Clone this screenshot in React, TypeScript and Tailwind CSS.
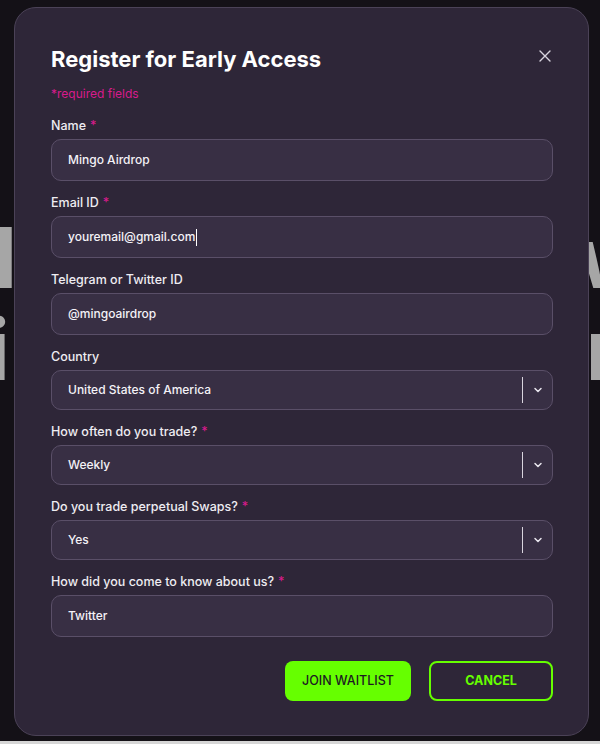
import React from "react";

const Asterisk = () => <span className="ml-1 text-[#d81b8c]">*</span>;

const Chevron = () => (
  <svg width="12" height="12" viewBox="0 0 24 24" fill="none" stroke="#e9e6ee" strokeWidth="3" strokeLinecap="round" strokeLinejoin="round">
    <path d="M6 9l6 6 6-6" />
  </svg>
);

interface FieldProps {
  label: string;
  required?: boolean;
  value: string;
  select?: boolean;
  caret?: boolean;
}

const Field: React.FC<FieldProps> = ({ label, required, value, select, caret }) => {
  return (
    <div className="flex flex-col">
      <label className="mb-[4px] text-[12.5px] leading-[18px] font-medium text-[#efedf2]">
        {label}
        {required && <Asterisk />}
      </label>
      {select ? (
        <div className="flex h-[40px] items-center rounded-[10px] border border-[#5a4f68] bg-[#382f44]">
          <span className="flex-1 pl-[16px] text-[12px] font-medium text-[#f4f2f7]">{value}</span>
          <div className="h-[26px] w-px bg-[#d9d5de]" />
          <div className="flex w-[29px] items-center justify-center">
            <Chevron />
          </div>
        </div>
      ) : (
        <div className="flex h-[42px] items-center rounded-[10px] border border-[#5a4f68] bg-[#382f44] pl-[16px]">
          <span className="text-[12px] font-medium text-[#f4f2f7]">{value}</span>
          {caret && <span className="ml-px h-[17px] w-px bg-white" />}
        </div>
      )}
    </div>
  );
};

export default function App() {
  return (
    <div
      className="relative h-[744px] w-[600px] overflow-hidden bg-[#141117]"
      style={{ fontFamily: "Inter, 'Noto Sans', sans-serif" }}
    >
      {/* page behind the dialog */}
      <div className="flex flex-col pt-[212px] text-[84px] leading-[92px] font-bold text-[#a6a6a6]">
        <div className="flex justify-between">
          <span className="-ml-[36px]">d</span>
          <span className="-mr-[50px]">w</span>
        </div>
        <div className="flex justify-between">
          <span className="-ml-[13px]">i</span>
          <span className="-mr-[20px]">r</span>
        </div>
      </div>
      <div className="absolute bottom-0 left-0 h-[3px] w-full bg-[#d6d6d6]" />

      {/* dialog */}
      <div className="absolute top-[7px] left-[14px] w-[575px] rounded-[22px] border border-[#4b4257] bg-[#2e2638] pt-[36px] pr-[35px] pb-[34px] pl-[36px]">
        <div className="flex items-start justify-between">
          <h2 className="text-[22px] leading-[30px] font-bold text-white">Register for Early Access</h2>
          <button className="mt-[6px] mr-[2px] text-[#d8d4de]">
            <svg width="12" height="12" viewBox="0 0 12 12" stroke="currentColor" strokeWidth="1.4" strokeLinecap="round">
              <path d="M1 1l10 10M11 1L1 11" />
            </svg>
          </button>
        </div>
        <p className="mt-[12px] text-[12px] leading-[16px] text-[#d81b8c]">*required fields</p>

        <div className="mt-[15px] flex flex-col gap-[13px]">
          <Field label="Name" required value="Mingo Airdrop" />
          <Field label="Email ID" required value="youremail@gmail.com" caret />
          <Field label="Telegram or Twitter ID" value="@mingoairdrop" />
          <Field label="Country" value="United States of America" select />
          <Field label="How often do you trade?" required value="Weekly" select />
          <Field label="Do you trade perpetual Swaps?" required value="Yes" select />
          <Field label="How did you come to know about us?" required value="Twitter" />
        </div>

        <div className="mt-[24px] flex justify-end gap-[18px]">
          <button className="h-[40px] w-[126px] rounded-[8px] bg-[#66ff00] text-[12.5px] font-medium text-[#1d1a22]">
            JOIN WAITLIST
          </button>
          <button className="h-[40px] w-[124px] rounded-[8px] border-2 border-[#66ff00] text-[12.5px] font-bold text-[#66ff00]">
            CANCEL
          </button>
        </div>
      </div>
    </div>
  );
}
